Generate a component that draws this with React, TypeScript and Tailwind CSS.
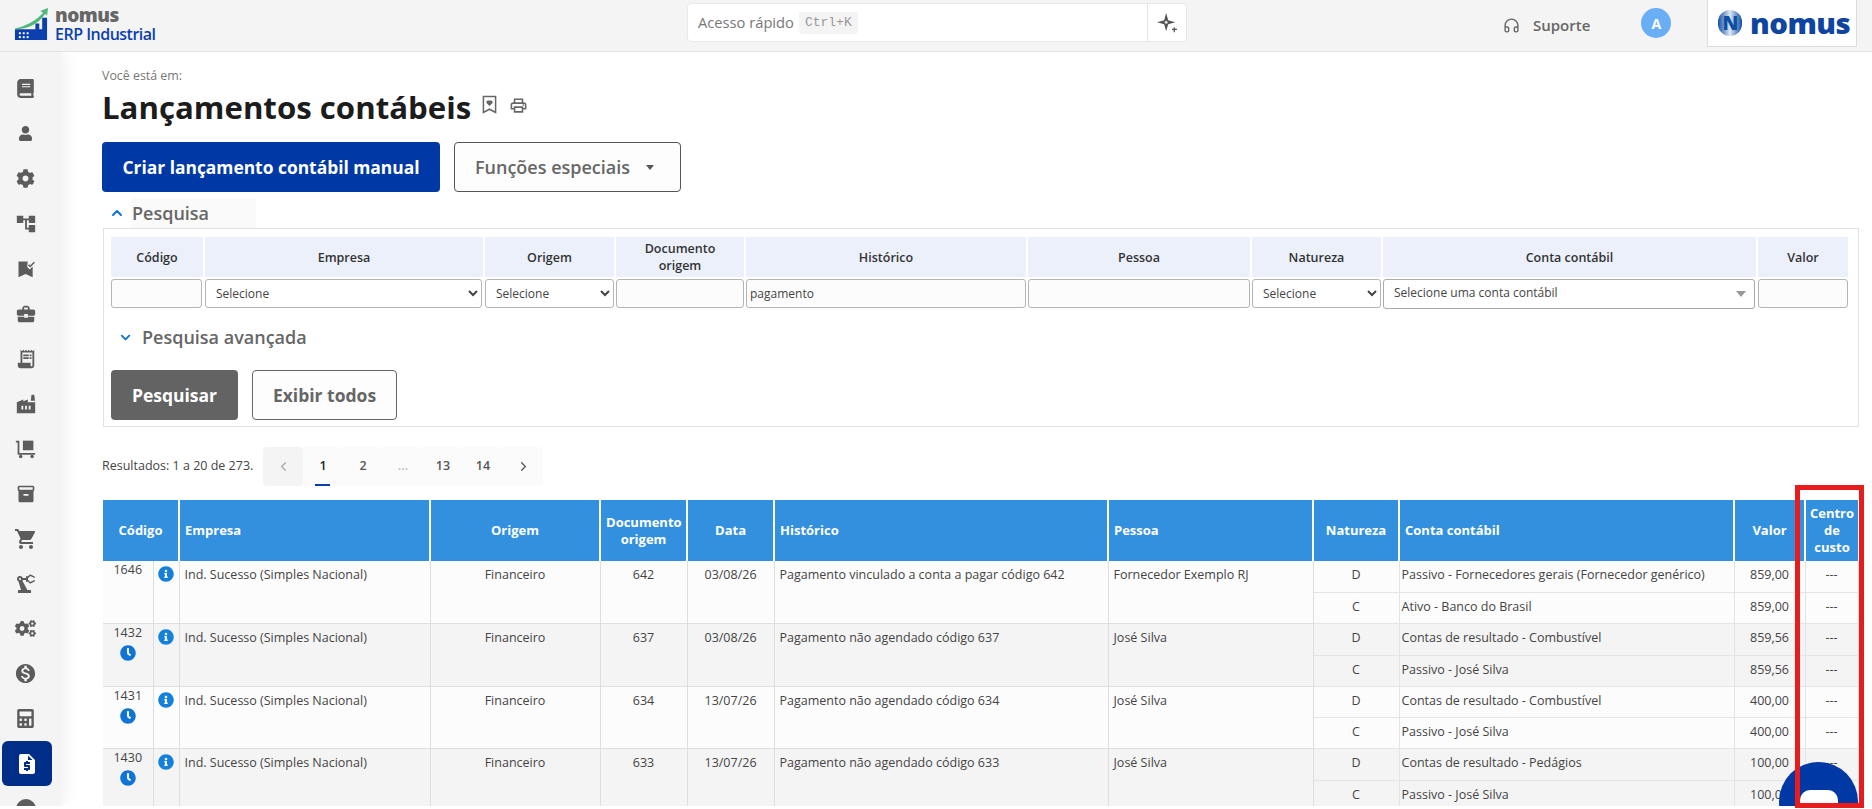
import { ChevronDown, ChevronLeft, ChevronRight, ChevronUp, Headphones } from 'lucide-react';
import { FaBook, FaCalculator, FaClock, FaCog, FaCogs, FaInfoCircle, FaUser } from 'react-icons/fa';
import {
  MdAccountTree,
  MdBusinessCenter,
  MdFactory,
  MdInventory2,
  MdMonetizationOn,
  MdOutlinePrint,
  MdPrecisionManufacturing,
  MdReceiptLong,
  MdRequestQuote,
  MdShoppingCart,
} from 'react-icons/md';

const font = "font-['Open_Sans',sans-serif]";

function BookmarkCheck() {
  return (
    <svg viewBox="0 0 24 24" className="w-[20px] h-[20px]" fill="currentColor">
      <path d="M3 3h11l-0.5 6.5 3 3L20 9v13l-8.5-4L3 22z" />
      <path d="M15 7l2 2 5-5" fill="none" stroke="currentColor" strokeWidth="1.8" />
    </svg>
  );
}

function Dolly() {
  return (
    <svg viewBox="0 0 24 24" className="w-[21px] h-[21px]" fill="currentColor">
      <path d="M9 3h12v11H9z" />
      <path d="M1 3h4v14h18v2H3V5H1z" />
      <circle cx="6.5" cy="21" r="2" />
      <circle cx="19.5" cy="21" r="2" />
    </svg>
  );
}

function BookmarkHeart() {
  return (
    <svg viewBox="0 0 16 20" className="w-[15px] h-[20px]" fill="none" stroke="#666" strokeWidth="1.6">
      <path d="M1.5 1h13v17l-6.5-3.5L1.5 18z" />
      <path d="M8 11L4.8 7.8a1.9 1.9 0 0 1 3.2-2 1.9 1.9 0 0 1 3.2 2z" fill="#666" stroke="none" />
    </svg>
  );
}

function Sparkle() {
  return (
    <svg viewBox="0 0 24 24" className="w-[20px] h-[20px]" fill="#555">
      <path d="M11 0l2.4 8.6L22 11l-8.6 2.4L11 22l-2.4-8.6L0 11l8.6-2.4z" />
      <circle cx="11" cy="11" r="1.8" fill="#ddd" />
      <path d="M20 17h1.5v2H24v1.5h-2.5V23H20v-2.5h-2V19h2z" />
    </svg>
  );
}

function ErpLogo() {
  return (
    <svg viewBox="0 0 36 36" className="w-[35px] h-[35px] shrink-0">
      <path d="M1 23h21v-6h4v6h3V11h5v23H1z" fill="#0b3fae" />
      <path d="M1 22C12 20 23 14 30 6l-3-2 8-3-1 8-2-2C26 17 14 23 1 23z" fill="#4cb87a" />
      <g fill="#fff">
        <rect x="5" y="26" width="2" height="2" />
        <rect x="9" y="26" width="2" height="2" />
        <rect x="13" y="26" width="2" height="2" />
        <rect x="5" y="30" width="2" height="2" />
        <rect x="9" y="30" width="2" height="2" />
        <rect x="13" y="30" width="2" height="2" />
      </g>
    </svg>
  );
}

const navIcons = [
  <FaBook className="w-[17px] h-[19px]" />,
  <FaUser className="w-[15px] h-[15px]" />,
  <FaCog className="w-[19px] h-[19px]" />,
  <MdAccountTree className="w-[22px] h-[22px]" />,
  <BookmarkCheck />,
  <MdBusinessCenter className="w-[22px] h-[22px]" />,
  <MdReceiptLong className="w-[22px] h-[22px]" />,
  <MdFactory className="w-[22px] h-[22px]" />,
  <Dolly />,
  <MdInventory2 className="w-[20px] h-[20px]" />,
  <MdShoppingCart className="w-[24px] h-[24px]" />,
  <MdPrecisionManufacturing className="w-[24px] h-[24px]" />,
  <FaCogs className="w-[21px] h-[21px]" />,
  <MdMonetizationOn className="w-[23px] h-[23px]" />,
  <FaCalculator className="w-[17px] h-[19px]" />,
];

const filterHeads = [
  'Código',
  'Empresa',
  'Origem',
  'Documento origem',
  'Histórico',
  'Pessoa',
  'Natureza',
  'Conta contábil',
  'Valor',
];

const rows = [
  {
    code: '1646',
    clock: false,
    doc: '642',
    date: '03/08/26',
    hist: 'Pagamento vinculado a conta a pagar código 642',
    person: 'Fornecedor Exemplo RJ',
    debit: 'Passivo - Fornecedores gerais (Fornecedor genérico)',
    credit: 'Ativo - Banco do Brasil',
    value: '859,00',
  },
  {
    code: '1432',
    clock: true,
    doc: '637',
    date: '03/08/26',
    hist: 'Pagamento não agendado código 637',
    person: 'José Silva',
    debit: 'Contas de resultado - Combustível',
    credit: 'Passivo - José Silva',
    value: '859,56',
  },
  {
    code: '1431',
    clock: true,
    doc: '634',
    date: '13/07/26',
    hist: 'Pagamento não agendado código 634',
    person: 'José Silva',
    debit: 'Contas de resultado - Combustível',
    credit: 'Passivo - José Silva',
    value: '400,00',
  },
  {
    code: '1430',
    clock: true,
    doc: '633',
    date: '13/07/26',
    hist: 'Pagamento não agendado código 633',
    person: 'José Silva',
    debit: 'Contas de resultado - Pedágios',
    credit: 'Passivo - José Silva',
    value: '100,00',
  },
];

const inputClass =
  'w-full h-[29px] rounded-[3px] border border-[#b5b5b5] bg-[#fcfcfc] px-[3px] text-[12px] text-[#444] outline-none';
const selectClass =
  'w-full h-[29px] rounded-[3px] border border-[#b5b5b5] bg-white pl-[6px] text-[12px] text-[#444] outline-none';

function TopBar() {
  return (
    <header className="h-[52px] shrink-0 flex items-start bg-[#f4f4f4] border-b border-[#e4e4e4]">
      <div className="w-[687px] shrink-0 flex items-center gap-[6px] pl-[14px] pt-[5px]">
        <ErpLogo />
        <div className="flex flex-col">
          <span className="text-[19px] leading-[20px] font-extrabold text-[#666] tracking-[-0.5px]">nomus</span>
          <span className="text-[16px] leading-[19px] font-semibold text-[#0b3fae] tracking-[-0.5px]">
            ERP Industrial
          </span>
        </div>
      </div>
      <div className="mt-[3px] w-[500px] h-[39px] shrink-0 flex bg-white rounded-[4px] border border-[#e8e8e8]">
        <div className="flex-1 flex items-center pl-[10px] gap-[5px] border-r border-[#e4e4e4]">
          <span className="text-[14.7px] text-[#777]">Acesso rápido</span>
          <span className="h-[22px] px-[6px] flex items-center rounded-[3px] bg-[#f4f4f4] font-['Liberation_Mono',monospace] text-[13px] text-[#999]">
            Ctrl+K
          </span>
        </div>
        <div className="w-[38px] flex items-center justify-center">
          <Sparkle />
        </div>
      </div>
      <div className="flex-1 flex items-start">
        <div className="ml-[316px] mt-[15px] flex items-center gap-[13px]">
          <Headphones className="w-[17px] h-[17px] text-[#666]" strokeWidth={2} />
          <span className="text-[15px] leading-[20px] font-semibold text-[#666]">Suporte</span>
        </div>
        <div className="ml-[51px] mt-[8px] w-[30px] h-[30px] rounded-full bg-[#6aaff5] flex items-center justify-center text-white text-[14px] font-bold">
          A
        </div>
        <div className="ml-[36px] w-[150px] h-[47px] flex items-center gap-[8px] pl-[10px] bg-white border border-[#dcdcdc] border-t-0">
          <span className="w-[24px] h-[26px] rounded-full bg-gradient-to-r from-[#0b4ea2] via-[#dfe8f2] to-[#0b4ea2] flex items-center justify-center text-[19px] leading-none font-extrabold text-[#0b4ea2]">
            N
          </span>
          <span className="text-[28px] leading-[28px] font-extrabold text-[#0d45a0] tracking-[-0.5px] scale-x-[1.05] origin-left">
            nomus
          </span>
        </div>
      </div>
    </header>
  );
}

function Sidebar() {
  return (
    <aside className="relative z-10 w-[61px] shrink-0 bg-[#f4f4f4] shadow-[0_0_20px_rgba(0,0,0,0.09)] flex flex-col pt-[14px] text-[#5c5c5c]">
      {navIcons.map((icon, i) => (
        <div key={i} className="h-[45px] w-[51px] flex items-center justify-center shrink-0">
          {icon}
        </div>
      ))}
      <div className="ml-[2px] h-[45px] w-[50px] shrink-0 rounded-[6px] bg-[#002d87] flex items-center justify-center text-white">
        <MdRequestQuote className="w-[24px] h-[24px]" />
      </div>
      <div className="ml-[16px] mt-[13px] w-[20px] h-[20px] shrink-0 rounded-full bg-[#5c5c5c]" />
    </aside>
  );
}

function SearchPanel() {
  return (
    <div className="ml-px w-[1756px] h-[199px] border border-[#e2e2e2] pl-[7px] pt-[8px]">
      <div className="grid grid-cols-[94px_280px_131px_130px_282px_224px_131px_375px_92px]">
        {filterHeads.map((h) => (
          <div
            key={h}
            className="mr-[2px] h-[40px] px-[6px] flex items-center justify-center text-center bg-[#ebf0fa] text-[12.5px] leading-[17px] font-semibold text-[#333]"
          >
            {h}
          </div>
        ))}
        <div className="mr-[3px] mt-[2px]">
          <input className={inputClass} readOnly />
        </div>
        <div className="mr-[3px] mt-[2px]">
          <select className={selectClass}>
            <option>Selecione</option>
          </select>
        </div>
        <div className="mr-[2px] mt-[2px]">
          <select className={selectClass}>
            <option>Selecione</option>
          </select>
        </div>
        <div className="mr-[2px] mt-[2px]">
          <input className={inputClass} readOnly />
        </div>
        <div className="mr-[2px] mt-[2px]">
          <input className={inputClass} readOnly value="pagamento" />
        </div>
        <div className="mr-[2px] mt-[2px]">
          <input className={inputClass} readOnly />
        </div>
        <div className="mr-[2px] mt-[2px]">
          <select className={selectClass}>
            <option>Selecione</option>
          </select>
        </div>
        <div className="mr-[3px] mt-[2px]">
          <div className="h-[30px] flex items-center justify-between rounded-[3px] border border-[#aaa] bg-white pl-[10px] pr-[8px] text-[12px] text-[#444]">
            <span className="-mt-[2px]">Selecione uma conta contábil</span>
            <span className="w-0 h-0 border-x-[5px] border-x-transparent border-t-[6px] border-t-[#999]" />
          </div>
        </div>
        <div className="mr-[2px] mt-[2px]">
          <input className={inputClass} readOnly />
        </div>
      </div>

      <div className="mt-[13px] flex items-center h-[30px]">
        <ChevronDown className="ml-[7px] w-[15px] h-[15px] text-[#1173d4]" strokeWidth={3} />
        <span className="ml-[9px] text-[18px] font-semibold text-[#666]">Pesquisa avançada</span>
      </div>

      <div className="mt-[18px] flex gap-[14px]">
        <button className="w-[127px] h-[50px] rounded-[4px] bg-[#636363] text-white text-[17.5px] font-bold">
          Pesquisar
        </button>
        <button className="w-[145px] h-[50px] rounded-[4px] border border-[#666] bg-[#fdfdfd] text-[#666] text-[17.5px] font-bold">
          Exibir todos
        </button>
      </div>
    </div>
  );
}

function Pagination() {
  const pages = [
    { label: '1', active: true },
    { label: '2' },
    { label: '...', muted: true },
    { label: '13' },
    { label: '14' },
  ];
  return (
    <div className="mt-[20px] flex items-center h-[39px]">
      <span className="w-[161px] text-[12.5px] text-[#444]">Resultados: 1 a 20 de 273.</span>
      <span className="w-[40px] h-[39px] rounded-[4px] bg-[#f4f4f4] flex items-center justify-center text-[#aaa]">
        <ChevronLeft className="w-[15px] h-[15px]" />
      </span>
      {pages.map((p) => (
        <span
          key={p.label}
          className={`relative w-[40px] h-[39px] rounded-[4px] bg-[#fbfbfb] flex items-center justify-center text-[12.5px] font-semibold ${
            p.muted ? 'text-[#bbb] font-normal' : p.active ? 'text-[#222]' : 'text-[#555]'
          }`}
        >
          {p.label}
          {p.active && <span className="absolute bottom-0 left-[12px] w-[15px] h-[2px] bg-[#0b3fae]" />}
        </span>
      ))}
      <span className="w-[40px] h-[39px] rounded-[4px] bg-[#fbfbfb] flex items-center justify-center text-[#555]">
        <ChevronRight className="w-[15px] h-[15px]" />
      </span>
    </div>
  );
}

function ResultsTable() {
  const th = 'bg-[#3390df] text-white text-[13px] leading-[17px] font-bold border-r-2 border-white px-[5px]';
  const td = 'align-top border-r border-b border-[#dedede] text-[12.5px] text-[#444] pt-[5px]';
  const sub = 'align-top border-r border-b border-[#e4e4e4] text-[12.5px] text-[#444] pt-[5px]';
  return (
    <table className="mt-[14px] ml-px w-[1755px] table-fixed border-collapse">
      <colgroup>
        <col className="w-[50px]" />
        <col className="w-[26px]" />
        <col className="w-[251px]" />
        <col className="w-[170px]" />
        <col className="w-[87px]" />
        <col className="w-[87px]" />
        <col className="w-[334px]" />
        <col className="w-[205px]" />
        <col className="w-[86px]" />
        <col className="w-[335px]" />
        <col className="w-[71px]" />
        <col className="w-[53px]" />
      </colgroup>
      <thead>
        <tr className="h-[61px]">
          <th colSpan={2} className={th}>Código</th>
          <th className={`${th} text-left`}>Empresa</th>
          <th className={th}>Origem</th>
          <th className={th}>Documento origem</th>
          <th className={th}>Data</th>
          <th className={`${th} text-left`}>Histórico</th>
          <th className={`${th} text-left`}>Pessoa</th>
          <th className={th}>Natureza</th>
          <th className={`${th} text-left`}>Conta contábil</th>
          <th className={th}>Valor</th>
          <th className="bg-[#3390df] text-white text-[13px] leading-[17px] font-bold px-[2px]">Centro de custo</th>
        </tr>
      </thead>
      {rows.map((r, i) => {
        const bg = i % 2 === 0 ? 'bg-[#fcfcfc]' : 'bg-[#f4f4f4]';
        return (
          <tbody key={r.code} className={bg}>
            <tr className={i % 2 === 0 ? 'h-[31px]' : 'h-[32px]'}>
              <td rowSpan={2} className={`${td} text-center !pt-0`}>
                <div className="leading-[18px]">{r.code}</div>
                {r.clock && <FaClock className="mx-auto mt-[3px] w-[16px] h-[16px] text-[#0f74d6]" />}
              </td>
              <td rowSpan={2} className={`${td} !pt-[5px]`}>
                <FaInfoCircle className="mx-auto w-[16px] h-[16px] text-[#1580dc]" />
              </td>
              <td rowSpan={2} className={`${td} pl-[5px]`}>Ind. Sucesso (Simples Nacional)</td>
              <td rowSpan={2} className={`${td} text-center`}>Financeiro</td>
              <td rowSpan={2} className={`${td} text-center`}>{r.doc}</td>
              <td rowSpan={2} className={`${td} text-center`}>{r.date}</td>
              <td rowSpan={2} className={`${td} pl-[5px]`}>{r.hist}</td>
              <td rowSpan={2} className={`${td} pl-[5px]`}>{r.person}</td>
              <td className={`${sub} text-center`}>D</td>
              <td className={`${sub} pl-[2px]`}>{r.debit}</td>
              <td className={`${sub} text-center`}>{r.value}</td>
              <td className={`${sub} text-center`}>---</td>
            </tr>
            <tr className="h-[31px]">
              <td className={`${sub} text-center`}>C</td>
              <td className={`${sub} pl-[2px]`}>{r.credit}</td>
              <td className={`${sub} text-center`}>{r.value}</td>
              <td className={`${sub} text-center`}>---</td>
            </tr>
          </tbody>
        );
      })}
    </table>
  );
}

export default function App() {
  return (
    <div className={`${font} relative w-full h-[809px] overflow-hidden bg-white flex flex-col`}>
      <TopBar />
      <div className="flex h-[754px] overflow-hidden">
        <Sidebar />
        <main className="flex-1 min-w-0 pl-[41px] pr-[13px] pt-[16px] overflow-hidden">
          <div className="text-[12.4px] leading-[16px] text-[#777]">Você está em:</div>
          <div className="mt-[3px] h-[40px] flex items-center">
            <h1 className="text-[31.2px] leading-[40px] font-bold text-[#1c1c1c]">Lançamentos contábeis</h1>
            <span className="ml-[11px] -mt-[5px]">
              <BookmarkHeart />
            </span>
            <MdOutlinePrint className="ml-[12px] -mt-[3px] w-[19px] h-[19px] text-[#666]" />
          </div>

          <div className="mt-[15px] flex gap-[14px]">
            <button className="w-[338px] h-[50px] rounded-[4px] bg-[#0039a6] text-white text-[17.4px] font-bold">
              Criar lançamento contábil manual
            </button>
            <button className="w-[227px] h-[50px] rounded-[4px] border border-[#555] bg-[#fdfdfd] pr-[6px] text-[#666] text-[18px] font-semibold flex items-center justify-center gap-[16px]">
              Funções especiais
              <span className="w-0 h-0 border-x-[4px] border-x-transparent border-t-[5px] border-t-[#555]" />
            </button>
          </div>

          <div className="mt-[6px] h-[30px] flex items-center">
            <ChevronUp className="ml-[7px] w-[16px] h-[16px] text-[#1173d4]" strokeWidth={3} />
            <span className="ml-[6px] w-[125px] h-[30px] pl-[1px] flex items-center bg-[#fafafa] text-[18px] font-semibold text-[#666]">
              Pesquisa
            </span>
          </div>

          <SearchPanel />
          <Pagination />
          <ResultsTable />
        </main>
      </div>

      {/* chat bubble */}
      <div className="absolute left-[1779px] top-[762px] w-[79px] h-[44px] overflow-hidden">
        <div className="w-[79px] h-[79px] rounded-full bg-[#0039a6] pt-[28px] pl-[21px]">
          <div className="w-[38px] h-[30px] rounded-[10px] bg-white" />
        </div>
      </div>
      {/* red annotation */}
      <div className="absolute left-[1795px] top-[485px] w-[69px] h-[323px] border-[5px] border-[#e81c1c]" />
    </div>
  );
}
